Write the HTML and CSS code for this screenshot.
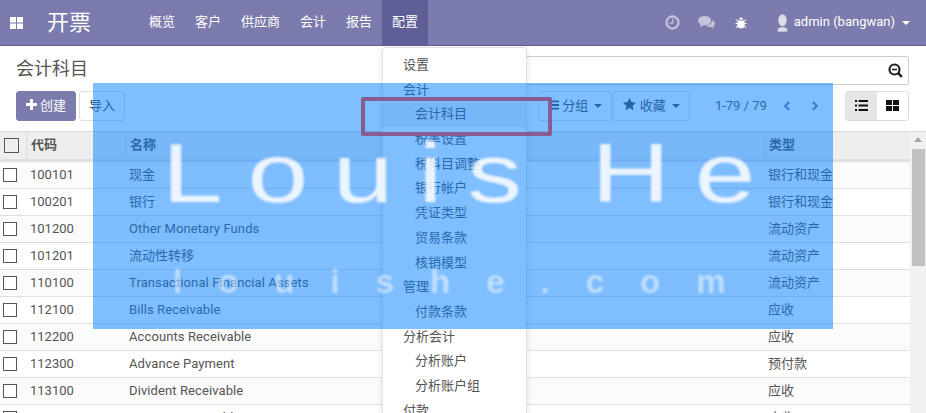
FILE: index.html
```html
<!DOCTYPE html>
<html lang="en">

<head>
    <meta charset="UTF-8">
    <meta name="viewport" content="width=device-width, initial-scale=1.0">
    <title>会计科目</title>
    <link rel="stylesheet" href="styles.css">
</head>

<body>
    <header class="navbar">
        <svg class="apps-icon" width="14" height="14" viewBox="0 0 14 14">
            <path d="M0 1h6v5.500H0zM7 1h6v5.500H7zM0 7.500h6V13H0zM7 7.500h6V13H7z" fill="#fff"/>
        </svg>
        <span class="brand">开票</span>
        <nav class="nav-menu">
            <a>概览</a>
            <a>客户</a>
            <a>供应商</a>
            <a>会计</a>
            <a>报告</a>
            <a class="active">配置</a>
        </nav>
        <div class="nav-right">
            <svg class="sys-icon clock" width="15" height="15" viewBox="0 0 16 16">
                <circle cx="8" cy="8" r="6.400" fill="none" stroke="#c3c3dc" stroke-width="2.400"/>
                <path d="M8.300 4v4.600H4.800" fill="none" stroke="#c3c3dc" stroke-width="1.400"/>
            </svg>
            <svg class="sys-icon chat" width="17" height="15" viewBox="0 0 18 16">
                <ellipse cx="7" cy="6" rx="7" ry="5" fill="#c3c3dc"/>
                <path d="M3 9L2 13l5-3z" fill="#c3c3dc"/>
                <path d="M15 5.200c2 .9 3 2.300 3 3.800 0 1.300-.8 2.400-2 3.100l1 2.400-3.400-1.800c-2 .2-4-.4-5.100-1.600 3.700 0 6.800-2.500 6.500-5.900z" fill="#c3c3dc"/>
            </svg>
            <svg class="sys-icon bug" width="12" height="14" viewBox="0 0 14 15">
                <path d="M4.500 3.500C4.500 1.800 5.600 1 7 1s2.500.8 2.500 2.500zM3.500 4.500h7c.6 1 .8 2 .8 3v3c0 2-2 3.500-4.300 3.500s-4.300-1.500-4.300-3.500v-3c0-1 .2-2 .8-3z" fill="#fff"/>
                <path d="M3 5L1 3.500M11 5l2-1.500M3 8H.5M11 8h2.500M3 11l-2 2M11 11l2 2" stroke="#fff" stroke-width="1.200"/>
            </svg>
            <svg class="avatar" width="13" height="20" viewBox="0 0 14 20">
                <ellipse cx="7" cy="7" rx="4.500" ry="6.500" fill="#dcdce8"/>
                <path d="M1.500 19c0-3.500 2-4.500 5.500-4.500s5.500 1 5.500 4.500c0 .6-11 .6-11 0z" fill="#dcdce8"/>
            </svg>
            <span class="user-name">admin (bangwan)</span>
            <span class="caret"></span>
        </div>
    </header>

    <section class="control-panel">
        <div class="panel-left">
            <h2 class="page-title">会计科目</h2>
            <div class="main-buttons">
                <button class="btn btn-primary">
                    <svg width="11" height="11" viewBox="0 0 11 11"><path d="M4 0h3v4h4v3H7v4H4V7H0V4h4z" fill="#fff"/></svg>
                    创建
                </button>
                <button class="btn">导入</button>
            </div>
        </div>
        <div class="panel-right">
            <div class="search-box">
                <svg width="15" height="15" viewBox="0 0 15 15">
                    <circle cx="6.500" cy="6.500" r="5" fill="none" stroke="#222" stroke-width="2.200"/>
                    <path d="M4 6.500h5" stroke="#222" stroke-width="1.600"/>
                    <path d="M10.200 10.200l3.600 3.600" stroke="#222" stroke-width="2.600"/>
                </svg>
            </div>
            <div class="search-options">
                <div class="filter-buttons">
                    <button class="btn btn-plain">
                        <svg width="11" height="10" viewBox="0 0 12 10"><path d="M0 0h12v2H0zM0 4h12v2H0zM0 8h12v2H0z" fill="#4c4c4c"/></svg>
                        分组 <span class="caret dark"></span>
                    </button>
                    <button class="btn btn-plain">
                        <svg width="13" height="12" viewBox="0 0 13 12"><path d="M6.500 0l2 4.100 4.500.6-3.300 3.100.8 4.500-4-2.200-4 2.200.8-4.500L0 4.700l4.500-.6z" fill="#4c4c4c"/></svg>
                        收藏 <span class="caret dark"></span>
                    </button>
                </div>
                <div class="pager">
                    <span>1-79 / 79</span>
                    <svg width="8" height="12" viewBox="0 0 9 12"><path d="M7 1.500L2.500 6 7 10.500" fill="none" stroke="#7c7bad" stroke-width="2.400"/></svg>
                    <svg class="pager-next" width="8" height="12" viewBox="0 0 9 12"><path d="M2 1.500L6.500 6 2 10.500" fill="none" stroke="#7c7bad" stroke-width="2.400"/></svg>
                </div>
                <div class="view-switch">
                    <button class="view-btn active">
                        <svg width="13" height="11" viewBox="0 0 13 11"><path d="M0 0h2v2H0zM3.500 0H13v2H3.500zM0 4.500h2v2H0zM3.500 4.500H13v2H3.500zM0 9h2v2H0zM3.500 9H13v2H3.500z" fill="#111"/></svg>
                    </button>
                    <button class="view-btn">
                        <svg width="13" height="11" viewBox="0 0 13 11"><path d="M0 0h6v5H0zM7 0h6v5H7zM0 6h6v5H0zM7 6h6v5H7z" fill="#111"/></svg>
                    </button>
                </div>
            </div>
        </div>
    </section>

    <main class="list-area">
        <table class="account-table">
            <colgroup>
                <col class="col-check">
                <col class="col-code">
                <col class="col-name">
                <col>
            </colgroup>
            <thead>
                <tr>
                    <th><span class="check head-check"></span></th>
                    <th>代码</th>
                    <th>名称</th>
                    <th>类型</th>
                </tr>
            </thead>
            <tbody>
                <tr><td><span class="check"></span></td><td>100101</td><td>现金</td><td>银行和现金</td></tr>
                <tr><td><span class="check"></span></td><td>100201</td><td>银行</td><td>银行和现金</td></tr>
                <tr><td><span class="check"></span></td><td>101200</td><td class="en">Other Monetary Funds</td><td>流动资产</td></tr>
                <tr><td><span class="check"></span></td><td>101201</td><td>流动性转移</td><td>流动资产</td></tr>
                <tr><td><span class="check"></span></td><td>110100</td><td class="en">Transactional Financial Assets</td><td>流动资产</td></tr>
                <tr><td><span class="check"></span></td><td>112100</td><td class="en">Bills Receivable</td><td>应收</td></tr>
                <tr><td><span class="check"></span></td><td>112200</td><td class="en">Accounts Receivable</td><td>应收</td></tr>
                <tr><td><span class="check"></span></td><td>112300</td><td class="en">Advance Payment</td><td>预付款</td></tr>
                <tr><td><span class="check"></span></td><td>113100</td><td class="en">Divident Receivable</td><td>应收</td></tr>
                <tr><td><span class="check"></span></td><td>113200</td><td class="en">Interest Receivable</td><td>应收</td></tr>
            </tbody>
        </table>
        <div class="scrollbar">
            <span class="scroll-arrow"></span>
            <span class="scroll-thumb"></span>
        </div>
    </main>

    <!-- dropdown of the 配置 menu -->
    <ul class="dropdown">
        <li class="item">设置</li>
        <li class="item">会计</li>
        <li class="item sub selected">会计科目</li>
        <li class="item sub">税率设置</li>
        <li class="item sub">税科目调整</li>
        <li class="item sub">银行帐户</li>
        <li class="item sub">凭证类型</li>
        <li class="item sub">贸易条款</li>
        <li class="item sub">核销模型</li>
        <li class="item">管理</li>
        <li class="item sub">付款条款</li>
        <li class="item">分析会计</li>
        <li class="item sub">分析账户</li>
        <li class="item sub">分析账户组</li>
        <li class="item">付款</li>
    </ul>

    <!-- site banner laid over the app -->
    <div class="banner">
        <div class="banner-title">Louis He</div>
        <div class="banner-site">louishe.com</div>
    </div>
    <div class="highlight-box"></div>
</body>

</html>
```

FILE: styles.css
```css
/* Page base */
html,
body {
    height: 413px;
    overflow: hidden;
}

body {
    margin: 0;
    padding: 0;
    background-color: #fff;
    color: #555;
    font-family: Roboto, "Noto Sans CJK SC", sans-serif;
    font-size: 13px;
    line-height: 1.42857;
}

/* Top bar */
.navbar {
    display: flex;
    align-items: center;
    height: 45px;
    background-color: #7c7bad;
    border-bottom: 1px solid #5f5e97;
    color: #fff;
}

.apps-icon {
    margin-left: 10px;
}

.brand {
    margin-left: 23px;
    width: 81px;
    font-size: 22px;
}

.nav-menu {
    display: flex;
    height: 45px;
    margin-left: 11px;
}

.nav-menu a {
    display: flex;
    align-items: center;
    padding: 0 10px;
}

.nav-menu a.active {
    background-color: #5f5e97;
}

.nav-right {
    display: flex;
    align-items: center;
    margin-left: auto;
    padding-right: 16px;
}

.sys-icon.clock {
    margin-right: 18px;
}

.sys-icon.chat {
    margin-right: 20px;
}

.sys-icon.bug {
    margin-right: 29px;
}

.avatar {
    margin-right: 5px;
}

.user-name {
    margin-right: 7px;
}

.caret {
    display: inline-block;
    width: 0;
    height: 0;
    border-top: 4px solid #fff;
    border-left: 4px solid transparent;
    border-right: 4px solid transparent;
}

.caret.dark {
    border-top-color: #4c4c4c;
    margin-left: 3px;
    vertical-align: middle;
}

/* Control panel */
.control-panel {
    display: flex;
    justify-content: space-between;
    height: 86px;
    padding: 10px 17px 0 16px;
    box-sizing: border-box;
    border-bottom: 1px solid #d8d8d8;
}

.page-title {
    margin: 0;
    height: 35px;
    font-size: 18px;
    font-weight: normal;
    line-height: 25px;
}

.main-buttons {
    display: flex;
    gap: 3px;
}

.btn {
    height: 30px;
    padding: 0 9px;
    border: 1px solid #ddd;
    border-radius: 3px;
    background-color: #fff;
    color: #4c4c4c;
    font: inherit;
}

.btn-primary {
    width: 60px;
    padding: 0;
    background-color: #7c7bad;
    border-color: #7c7bad;
    color: #fff;
}

.panel-right {
    width: 383px;
}

.search-box {
    display: flex;
    align-items: center;
    justify-content: flex-end;
    height: 29px;
    box-sizing: border-box;
    padding-right: 5px;
    border: 1px solid #ccc;
    border-radius: 2px;
    background-color: #fff;
}

.search-options {
    display: flex;
    align-items: center;
    margin-top: 6px;
    margin-left: 12px;
}

.filter-buttons {
    display: flex;
    gap: 1px;
}

.btn-plain {
    padding: 0 9px;
    white-space: nowrap;
}

.pager {
    display: flex;
    align-items: center;
    gap: 16px;
    margin-left: 25px;
}

.pager-next {
    margin-left: 4px;
}

.view-switch {
    display: flex;
    margin-left: auto;
    border: 1px solid #ddd;
    border-radius: 3px;
}

.view-btn {
    width: 31px;
    height: 28px;
    padding: 0;
    border: none;
    background-color: #fff;
}

.view-btn.active {
    background-color: #e6e6e6;
}

/* Account list */
.list-area {
    display: flex;
    align-items: flex-start;
}

.account-table {
    width: 910px;
    table-layout: fixed;
    border-collapse: collapse;
}

.col-check {
    width: 27px;
}

.col-code {
    width: 99px;
}

.col-name {
    width: 639px;
}

th,
td {
    height: 26px;
    padding: 0 3px;
    text-align: left;
    font-weight: normal;
    border-bottom: 1px solid #dfdfe6;
    white-space: nowrap;
}

th {
    height: 27px;
    font-weight: bold;
    background-color: #eee;
    border-left: 2px solid #e4e4e4;
    border-bottom: 3px solid #dfe0e4;
}

th:first-child {
    border-left: none;
}

td.en {
    letter-spacing: 0.1px;
}

tbody tr:nth-child(odd) {
    background-color: #fbfbfb;
}

.check {
    display: block;
    width: 12px;
    height: 12px;
    border: 1px solid #555;
    background-color: #fff;
}

.head-check {
    width: 13px;
    height: 13px;
    margin-left: 1px;
    background-color: transparent;
}

/* Scrollbar at the right of the list */
.scrollbar {
    display: flex;
    flex-direction: column;
    align-items: center;
    width: 16px;
    height: 281px;
    background-color: #f1f1f1;
}

.scroll-arrow {
    margin-top: 5px;
    width: 0;
    height: 0;
    border-bottom: 5px solid #a3a3a3;
    border-left: 4px solid transparent;
    border-right: 4px solid transparent;
}

.scroll-thumb {
    margin-top: 7px;
    width: 13px;
    height: 117px;
    background-color: #c1c1c1;
}

/* Dropdown menu */
.dropdown {
    position: absolute;
    top: 47px;
    left: 382px;
    width: 143px;
    margin: 0;
    padding: 5px 0;
    list-style: none;
    background-color: #fff;
    border: 1px solid #e2e2e2;
    border-radius: 3px 3px 0 0;
    box-shadow: 0 2px 6px rgba(0, 0, 0, 0.12);
}

.item {
    height: 24.7px;
    padding: 0 20px;
    line-height: 24.7px;
}

.item.sub {
    padding-left: 32px;
}

.item.selected {
    background-color: #eee;
}

/* Banner and its outlined box */
.banner {
    position: absolute;
    top: 83px;
    left: 93px;
    width: 740px;
    height: 246px;
    background-color: rgba(0, 125, 255, 0.5);
    color: #fff;
    overflow: hidden;
    font-family: "Liberation Sans", sans-serif;
}

.banner-title {
    margin: 42px 0 0 69px;
    font-size: 84px;
    line-height: 96px;
    letter-spacing: 19px;
    word-spacing: -8px;
    white-space: nowrap;
    opacity: 0.85;
    transform: scaleX(1.3);
    transform-origin: left center;
    filter: blur(0.8px);
}

.banner-site {
    margin: 41px 0 0 80px;
    font-size: 33px;
    font-weight: bold;
    line-height: 40px;
    letter-spacing: 36px;
    opacity: 0.5;
    white-space: nowrap;
    filter: blur(1px);
}

.highlight-box {
    position: absolute;
    top: 97px;
    left: 361px;
    width: 183px;
    height: 31px;
    border: 4px solid #8a5a92;
    border-radius: 2px;
}
```
